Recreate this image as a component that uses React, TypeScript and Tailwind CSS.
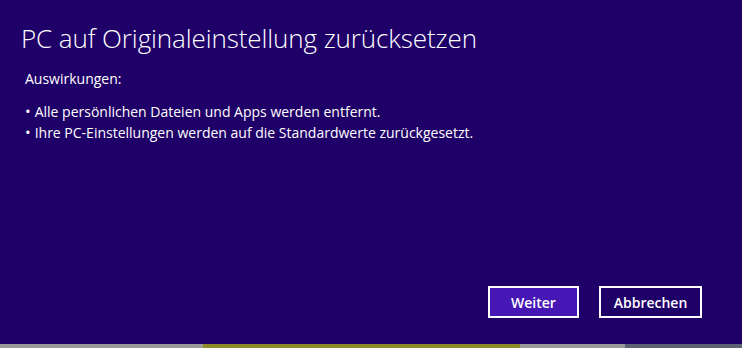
export default function App() {
  return (
    <div className="w-[742px] h-[348px] flex flex-col overflow-hidden font-['Open_Sans',sans-serif]">
      <div className="h-[344px] bg-[#1f0068] text-white flex flex-col pl-[21px] pr-[40px]">
        <h1 className="mt-[21px] text-[26px] font-light leading-[34px] tracking-[-0.1px]">
          PC auf Originaleinstellung zurücksetzen
        </h1>
        <div className="pl-[4px] text-[14px] leading-[21px]">
          <p className="mt-[13px]">Auswirkungen:</p>
          <ul className="mt-[12px]">
            <li className="flex gap-[4px]">
              <span className="text-[15px]">•</span>
              <span>Alle persönlichen Dateien und Apps werden entfernt.</span>
            </li>
            <li className="flex gap-[4px]">
              <span className="text-[15px]">•</span>
              <span>Ihre PC-Einstellungen werden auf die Standardwerte zurückgesetzt.</span>
            </li>
          </ul>
        </div>
        <div className="mt-auto mb-[26px] flex justify-end gap-[20px]">
          <button className="w-[91px] h-[32px] border-2 border-white bg-[#4617b4] text-[14px] font-semibold">
            Weiter
          </button>
          <button className="w-[103px] h-[32px] border-2 border-white bg-[#1f0068] text-[14px] font-semibold">
            Abbrechen
          </button>
        </div>
      </div>
      <div className="h-[4px] flex">
        <div className="w-[203px] bg-[#9a9a9a]" />
        <div className="w-[317px] bg-[#8f8a2a]" />
        <div className="w-[105px] bg-[#9a9a9a]" />
        <div className="flex-1 bg-[#5d6374]" />
      </div>
    </div>
  );
}
